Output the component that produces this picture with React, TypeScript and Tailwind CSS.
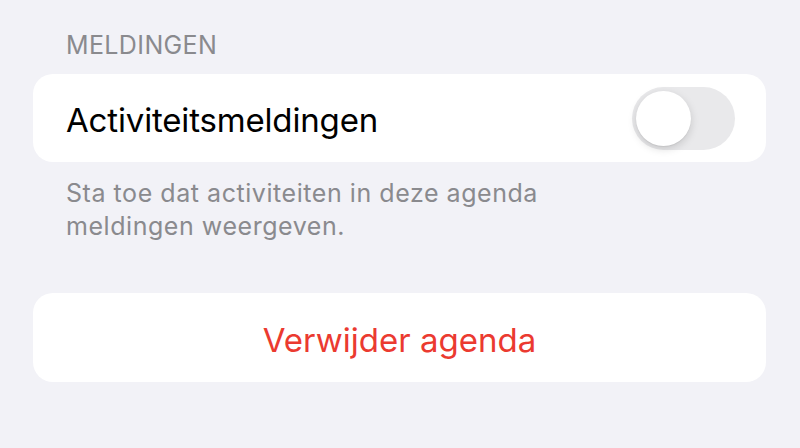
import { useState } from 'react';

function Toggle({ on, onChange }: { on: boolean; onChange: (v: boolean) => void }) {
  return (
    <button
      onClick={() => onChange(!on)}
      className={`flex w-[103px] h-[63px] shrink-0 items-center rounded-full p-[4px] transition-colors ${
        on ? 'bg-[#34c759] justify-end' : 'bg-[#e9e9eb] justify-start'
      }`}
    >
      <span className="block w-[55px] h-[55px] rounded-full bg-white shadow-[0_3px_8px_rgba(0,0,0,0.15),0_1px_1px_rgba(0,0,0,0.06)]" />
    </button>
  );
}

export default function App() {
  const [notify, setNotify] = useState(false);

  return (
    <div className="w-[800px] h-[448px] overflow-hidden bg-[#f2f2f7] pl-[33px] pr-[34px] pt-[31px] font-['Inter','Noto_Sans',sans-serif] antialiased">
      {/* Section header */}
      <div className="pl-[33px] text-[25px] leading-[28px] tracking-[0.015em] text-[#8a8a8e] uppercase">Meldingen</div>

      {/* Notifications row */}
      <div className="mt-[15px] flex h-[88px] items-center justify-between rounded-[20px] bg-white pl-[33px] pr-[31px]">
        <span className="mt-[4px] text-[33px] leading-[40px] tracking-[-0.005em] text-black">Activiteitsmeldingen</span>
        <Toggle on={notify} onChange={setNotify} />
      </div>

      {/* Section footer */}
      <p className="mt-[15px] pl-[33px] text-[25px] leading-[33px] tracking-[0.022em] text-[#8a8a8e]">
        Sta toe dat activiteiten in deze agenda
        <br />
        meldingen weergeven.
      </p>

      {/* Destructive action */}
      <button className="mt-[50px] flex h-[89px] w-full items-center justify-center rounded-[20px] bg-white">
        <span className="mt-[4px] text-[33px] leading-[40px] text-[#eb3a30]">Verwijder agenda</span>
      </button>
    </div>
  );
}
